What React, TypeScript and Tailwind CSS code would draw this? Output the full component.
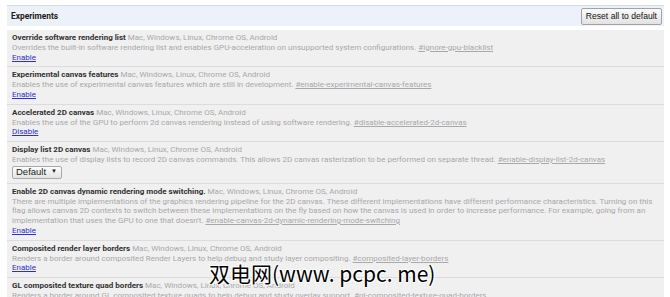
import React from 'react';

type Control = { kind: 'link'; label: string } | { kind: 'select'; label: string };

type Experiment = {
  id: string;
  name: string;
  platforms: string;
  description: string;
  hash: string;
  control: Control;
};

const PLATFORMS = 'Mac, Windows, Linux, Chrome OS, Android';

const EXPERIMENTS: Experiment[] = [
  {
    id: 'ignore-gpu-blacklist',
    name: 'Override software rendering list',
    platforms: PLATFORMS,
    description:
      'Overrides the built-in software rendering list and enables GPU-acceleration on unsupported system configurations.',
    hash: '#ignore-gpu-blacklist',
    control: { kind: 'link', label: 'Enable' },
  },
  {
    id: 'enable-experimental-canvas-features',
    name: 'Experimental canvas features',
    platforms: PLATFORMS,
    description: 'Enables the use of experimental canvas features which are still in development.',
    hash: '#enable-experimental-canvas-features',
    control: { kind: 'link', label: 'Enable' },
  },
  {
    id: 'disable-accelerated-2d-canvas',
    name: 'Accelerated 2D canvas',
    platforms: PLATFORMS,
    description: 'Enables the use of the GPU to perform 2d canvas rendering instead of using software rendering.',
    hash: '#disable-accelerated-2d-canvas',
    control: { kind: 'link', label: 'Disable' },
  },
  {
    id: 'enable-display-list-2d-canvas',
    name: 'Display list 2D canvas',
    platforms: PLATFORMS,
    description:
      'Enables the use of display lists to record 2D canvas commands. This allows 2D canvas rasterization to be performed on separate thread.',
    hash: '#enable-display-list-2d-canvas',
    control: { kind: 'select', label: 'Default' },
  },
  {
    id: 'enable-canvas-2d-dynamic-rendering-mode-switching',
    name: 'Enable 2D canvas dynamic rendering mode switching.',
    platforms: PLATFORMS,
    description:
      "There are multiple implementations of the graphics rendering pipeline for the 2D canvas. These different implementations have different performance characteristics. Turning on this flag allows canvas 2D contexts to switch between these implementations on the fly based on how the canvas is used in order to increase performance. For example, going from an implementation that uses the GPU to one that doesn't.",
    hash: '#enable-canvas-2d-dynamic-rendering-mode-switching',
    control: { kind: 'link', label: 'Enable' },
  },
  {
    id: 'composited-layer-borders',
    name: 'Composited render layer borders',
    platforms: PLATFORMS,
    description: 'Renders a border around composited Render Layers to help debug and study layer compositing.',
    hash: '#composited-layer-borders',
    control: { kind: 'link', label: 'Enable' },
  },
  {
    id: 'gl-composited-texture-quad-borders',
    name: 'GL composited texture quad borders',
    platforms: PLATFORMS,
    description:
      'Renders a border around GL composited texture quads to help debug and study overlay support.',
    hash: '#gl-composited-texture-quad-borders',
    control: { kind: 'link', label: 'Enable' },
  },
];

const ExperimentRow: React.FC<{ exp: Experiment }> = ({ exp }) => (
  <div className="pl-[5px] pr-[10px] pt-[3px] pb-[4px] border-b border-[#dcdcdc] leading-[9.8px]">
    <div>
      <span className="font-bold text-[#303030]">{exp.name}</span>{' '}
      <span className="text-[#a8a8a8]">{exp.platforms}</span>
    </div>
    <div className="text-[#a8a8a8]">
      {exp.description} <span className="underline">{exp.hash}</span>
    </div>
    {exp.control.kind === 'link' ? (
      <div>
        <span className="text-[#2e2ed2] underline">{exp.control.label}</span>
      </div>
    ) : (
      <div className="pt-[1px]">
        <div className="flex items-center justify-between h-[13px] w-[50px] pl-[3px] pr-[4px] border border-[#a9a9a9] rounded-[2px] bg-gradient-to-b from-[#fdfdfd] to-[#e4e4e4] text-[9.5px] text-[#222] font-['Liberation_Sans',Arial,sans-serif]">
          <span>{exp.control.label}</span>
          <span className="text-[6px]">▼</span>
        </div>
      </div>
    )}
  </div>
);

export default function App() {
  return (
    <div className="relative w-[670px] h-[297px] overflow-hidden bg-white font-['Roboto',sans-serif] text-[8px]">
      <div className="pt-[5px] pl-[7px] pr-[6px]">
        {/* Header band */}
        <div className="h-[21px] flex items-center justify-between bg-[#edf1f9] border-t border-[#d3dcef] pl-[4px] pr-[2px]">
          <span className="font-bold text-[8.4px] text-[#202020]">Experiments</span>
          <button className="h-[17px] px-[4px] border border-[#a3a3a3] rounded-[2px] bg-gradient-to-b from-[#fbfbfb] to-[#e2e2e2] text-[8.6px] text-[#111] font-['Liberation_Sans',Arial,sans-serif]">
            Reset all to default
          </button>
        </div>

        {/* Experiment list */}
        <div className="mt-[4px] bg-[#f0f0f0]">
          {EXPERIMENTS.map((exp) => (
            <ExperimentRow key={exp.id} exp={exp} />
          ))}
        </div>
      </div>

      {/* Watermark */}
      <div className="absolute left-[209px] top-[260px] text-[21px] leading-[26px] text-black font-['Noto_Sans_CJK_SC',sans-serif] [text-shadow:1px_1px_0_#fff,-1px_-1px_0_#fff,1px_-1px_0_#fff,-1px_1px_0_#fff]">
        双电网(www. pcpc. me)
      </div>
    </div>
  );
}
